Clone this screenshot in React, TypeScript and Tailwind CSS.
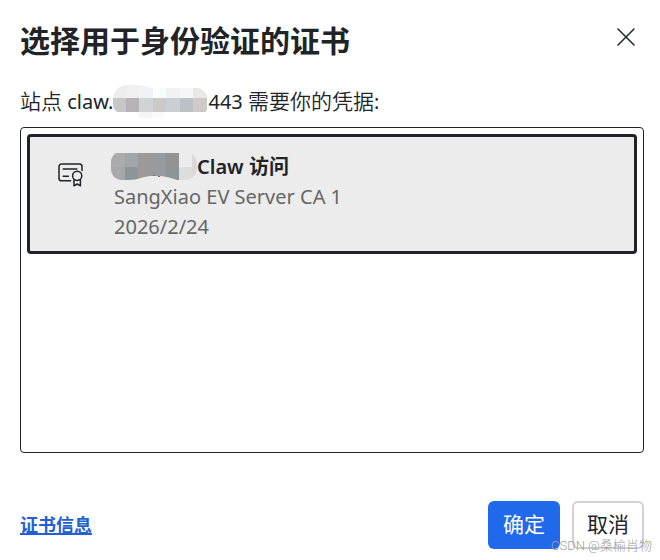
import { type ReactNode } from "react";

const HOST_TOP = ["#ededed", "#f0f0f1", "#f1f2f3", "#fafbfb", "#f2f2f3", "#f5f6f7", "#e9e8e7"];
const HOST_MID = ["#c8c7c7", "#b5b3b7", "#d2d3d4", "#cbcac5", "#c9cfd3", "#bcc1c6", "#cccbc8"];

const NAME_TOP = ["#acabab", "#a2a6a8", "#9c9999", "#979b9f", "#939295", "#ececec", "#d9d9d9"];
const NAME_BOTTOM = ["#a7a8a9", "#8d9599", "#9c9999", "#979b9f", "#8d9599", "#dddddd", "#d9d9d9"];

// Pixelated cover over the host name
function HostMask() {
  return (
    <svg width="95" height="34" viewBox="0 0 95 34" className="shrink-0" aria-hidden="true" shapeRendering="crispEdges">
      <clipPath id="host-mask">
        <path d="M0 13C1 5 6 0 16 0H24C32 0 35 3 40 3H84C91 4 95 9 95 15V22C95 25 93 27 91 27H52V31C47 33 43 34 38 33H26V27H4C1 25 0 22 0 19Z" />
      </clipPath>
      <g clipPath="url(#host-mask)">
        {HOST_TOP.map((fill, i) => (
          <rect key={i} x={i * 13.5 - 1} y="0" width="14" height="13" fill={fill} />
        ))}
        {HOST_MID.map((fill, i) => (
          <rect key={i} x={i * 13.5 - 1} y="13" width="14" height="14" fill={fill} />
        ))}
        <rect x="26" y="27" width="13" height="7" fill="#f5f5f5" />
        <rect x="39" y="27" width="13" height="7" fill="#fafafa" />
      </g>
    </svg>
  );
}

// Pixelated cover over the certificate owner
function NameMask() {
  return (
    <svg width="86" height="28" viewBox="0 0 86 28" className="shrink-0" aria-hidden="true" shapeRendering="crispEdges">
      <clipPath id="name-mask">
        <path d="M5 0H81C84 3 86 7 86 12V16C85 22 81 27 74 27H66C60 25 54 23 48 23H40C33 23 27 27 18 27H10C4 26 0 22 0 16V10C0 5 2 2 5 0Z" />
      </clipPath>
      <g clipPath="url(#name-mask)">
        {NAME_TOP.map((fill, i) => (
          <rect key={i} x={i * 13.5} y="0" width="14" height="14" fill={fill} />
        ))}
        {NAME_BOTTOM.map((fill, i) => (
          <rect key={i} x={i * 13.5} y="14" width="14" height="14" fill={fill} />
        ))}
      </g>
      <path d="M42 22.5H44M47 23.5H49" stroke="#6f7173" strokeWidth="1" />
    </svg>
  );
}

function CertificateIcon() {
  return (
    <svg
      width="25"
      height="24"
      viewBox="0 0 25 24"
      fill="none"
      stroke="#202327"
      strokeWidth="1.5"
      strokeLinecap="round"
      strokeLinejoin="round"
      className="mt-[11px] shrink-0"
      aria-hidden="true"
    >
      <path d="M12.6 17.8H3.6A2.6 2.6 0 0 1 1 15.2V3.6A2.6 2.6 0 0 1 3.6 1H21.4A2.6 2.6 0 0 1 24 3.6V7.4" />
      <path d="M5.2 6H18.8M5.2 13.3H10.4" />
      <circle cx="19.2" cy="12.8" r="4.6" />
      <path d="M16 16.6V22.8L19.2 21L22.4 22.8V16.6" />
    </svg>
  );
}

function DialogButton({ children, primary }: { children: ReactNode; primary?: boolean }) {
  return (
    <button
      type="button"
      className={
        primary
          ? "h-12 w-18 rounded-md bg-[#2169eb] text-[21px] text-white"
          : "h-12 w-18 rounded-md border-2 border-[#d1d1d1] bg-white text-[21px] text-[#202327]"
      }
    >
      {children}
    </button>
  );
}

export default function App() {
  return (
    <div
      role="dialog"
      aria-labelledby="title"
      className="relative flex min-h-screen flex-col bg-white pt-5 pr-4 pb-[11px] pl-5 font-['Noto_Sans','Noto_Sans_CJK_SC',sans-serif] text-xl text-[#202327]"
    >
      <header className="flex items-start justify-between">
        <h1 id="title" className="text-[30px] leading-[42px] font-bold">
          选择用于身份验证的证书
        </h1>
        <button type="button" aria-label="关闭" className="mt-2 mr-2">
          <svg width="20" height="20" viewBox="0 0 20 20" stroke="#202327" strokeWidth="1.5" strokeLinecap="round">
            <path d="M2 1L18 17M18 1L2 17" />
          </svg>
        </button>
      </header>

      <p className="mt-[23px] flex h-[34px] items-center whitespace-pre">
        <span>
          <span className="text-[21px] font-[350]">站点</span> claw.
        </span>
        <HostMask />
        <span>
          443 <span className="text-[21px] font-[350]">需要你的凭据</span>:
        </span>
      </p>

      <div role="listbox" aria-label="证书" className="mt-2 min-h-80 flex-1 rounded-sm border border-[#202327] p-1.5">
        <button
          type="button"
          role="option"
          aria-selected="true"
          className="flex w-full items-start gap-7 rounded-sm border-3 border-[#202327] bg-[#ececec] pt-[15px] pr-7 pb-[9px] pl-7 text-left"
        >
          <CertificateIcon />
          <span className="flex flex-col leading-[30px]">
            <span className="flex h-[30px] items-center font-semibold">
              <NameMask />
              Claw 访问
            </span>
            <span className="pl-[3px] text-[#666666]">SangXiao EV Server CA 1</span>
            <span className="pl-[3px] text-[#666666]">2026/2/24</span>
          </span>
        </button>
      </div>

      <footer className="mt-12 flex items-center justify-between">
        <a href="#info" className="text-lg font-bold text-[#2260d2] underline decoration-2">
          证书信息
        </a>
        <div className="flex gap-3">
          <DialogButton primary>确定</DialogButton>
          <DialogButton>取消</DialogButton>
        </div>
      </footer>

      <span className="absolute right-2 bottom-1 font-['Roboto','Noto_Sans_CJK_SC',sans-serif] text-[13px] leading-5 font-light text-[#a0a0a0]">
        CSDN @桑榆肖物
      </span>
    </div>
  );
}
